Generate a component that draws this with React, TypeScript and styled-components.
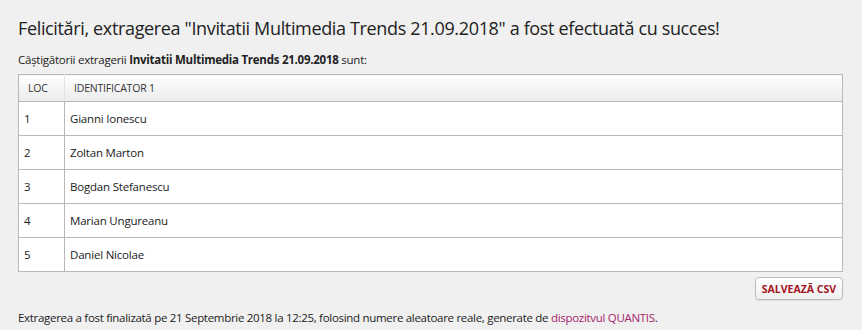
import styled, { createGlobalStyle } from 'styled-components';

const GlobalStyle = createGlobalStyle`
  html, body {
    margin: 0;
    padding: 0;
    background: #f0f0f0;
  }
  body {
    font-family: 'Open Sans', 'Noto Sans', sans-serif;
    color: #222;
  }
`;

const Page = styled.main`
  padding: 14px 19px 0 18px;
  display: flex;
  flex-direction: column;
`;

const Title = styled.h1`
  margin: 0;
  font-size: 18px;
  font-weight: 400;
  line-height: 28px;
  color: #222;
  letter-spacing: -0.35px;
`;

const Intro = styled.p`
  margin: 10px 0 0;
  font-size: 11.5px;
  line-height: 16px;
  letter-spacing: -0.25px;
  b {
    font-weight: 700;
  }
`;

const Table = styled.table`
  margin-top: 6px;
  width: 100%;
  border-collapse: collapse;
  background: #fff;
  border: 1px solid #b9b9b9;
  font-size: 11.5px;
  letter-spacing: -0.2px;
`;

const HeadCell = styled.th<{ $narrow?: boolean }>`
  height: 26px;
  padding: 0 0 0 9px;
  width: ${({ $narrow }) => ($narrow ? '36px' : 'auto')};
  text-align: left;
  font-weight: 400;
  font-size: 10.5px;
  color: #333;
  background: linear-gradient(#ffffff, #f4f4f4 55%, #ececec);
  border-bottom: 1px solid #b9b9b9;
  border-right: 1px solid #e4e4e4;
  &:last-child {
    border-right: none;
  }
`;

const Cell = styled.td`
  height: 33px;
  padding: 0 0 0 5px;
  border-top: 1px solid #b9b9b9;
  border-right: 1px solid #b9b9b9;
  color: #222;
  &:last-child {
    border-right: none;
  }
`;

const Actions = styled.div`
  display: flex;
  justify-content: flex-end;
  margin-top: 5px;
`;

const Button = styled.button`
  height: 23px;
  padding: 0 6px;
  border: 1px solid #bdbdbd;
  border-radius: 4px;
  background: linear-gradient(#ffffff, #efefef);
  box-shadow: 0 1px 1px rgba(0, 0, 0, 0.08);
  font-family: 'Open Sans', 'Noto Sans', sans-serif;
  font-size: 10.5px;
  font-weight: 700;
  color: #a3141f;
  cursor: pointer;
`;

const Footer = styled.p`
  margin: 10px 0 0;
  font-size: 11.5px;
  line-height: 16px;
  letter-spacing: -0.3px;
`;

const Link = styled.a`
  color: #a8236a;
  text-decoration: none;
`;

const winners = [
  'Gianni Ionescu',
  'Zoltan Marton',
  'Bogdan Stefanescu',
  'Marian Ungureanu',
  'Daniel Nicolae',
];

export default function App() {
  return (
    <>
      <GlobalStyle />
      <Page>
        <Title>
          Felicitări, extragerea "Invitatii Multimedia Trends 21.09.2018" a
          fost efectuată cu succes!
        </Title>
        <Intro>
          Câștigătorii extragerii <b>Invitatii Multimedia Trends 21.09.2018</b>{' '}
          sunt:
        </Intro>
        <Table>
          <thead>
            <tr>
              <HeadCell $narrow>LOC</HeadCell>
              <HeadCell>IDENTIFICATOR 1</HeadCell>
            </tr>
          </thead>
          <tbody>
            {winners.map((name, i) => (
              <tr key={name}>
                <Cell>{i + 1}</Cell>
                <Cell>{name}</Cell>
              </tr>
            ))}
          </tbody>
        </Table>
        <Actions>
          <Button>SALVEAZĂ CSV</Button>
        </Actions>
        <Footer>
          Extragerea a fost finalizată pe 21 Septembrie 2018 la 12:25, folosind
          numere aleatoare reale, generate de{' '}
          <Link href="#">dispozitvul QUANTIS</Link>.
        </Footer>
      </Page>
    </>
  );
}
